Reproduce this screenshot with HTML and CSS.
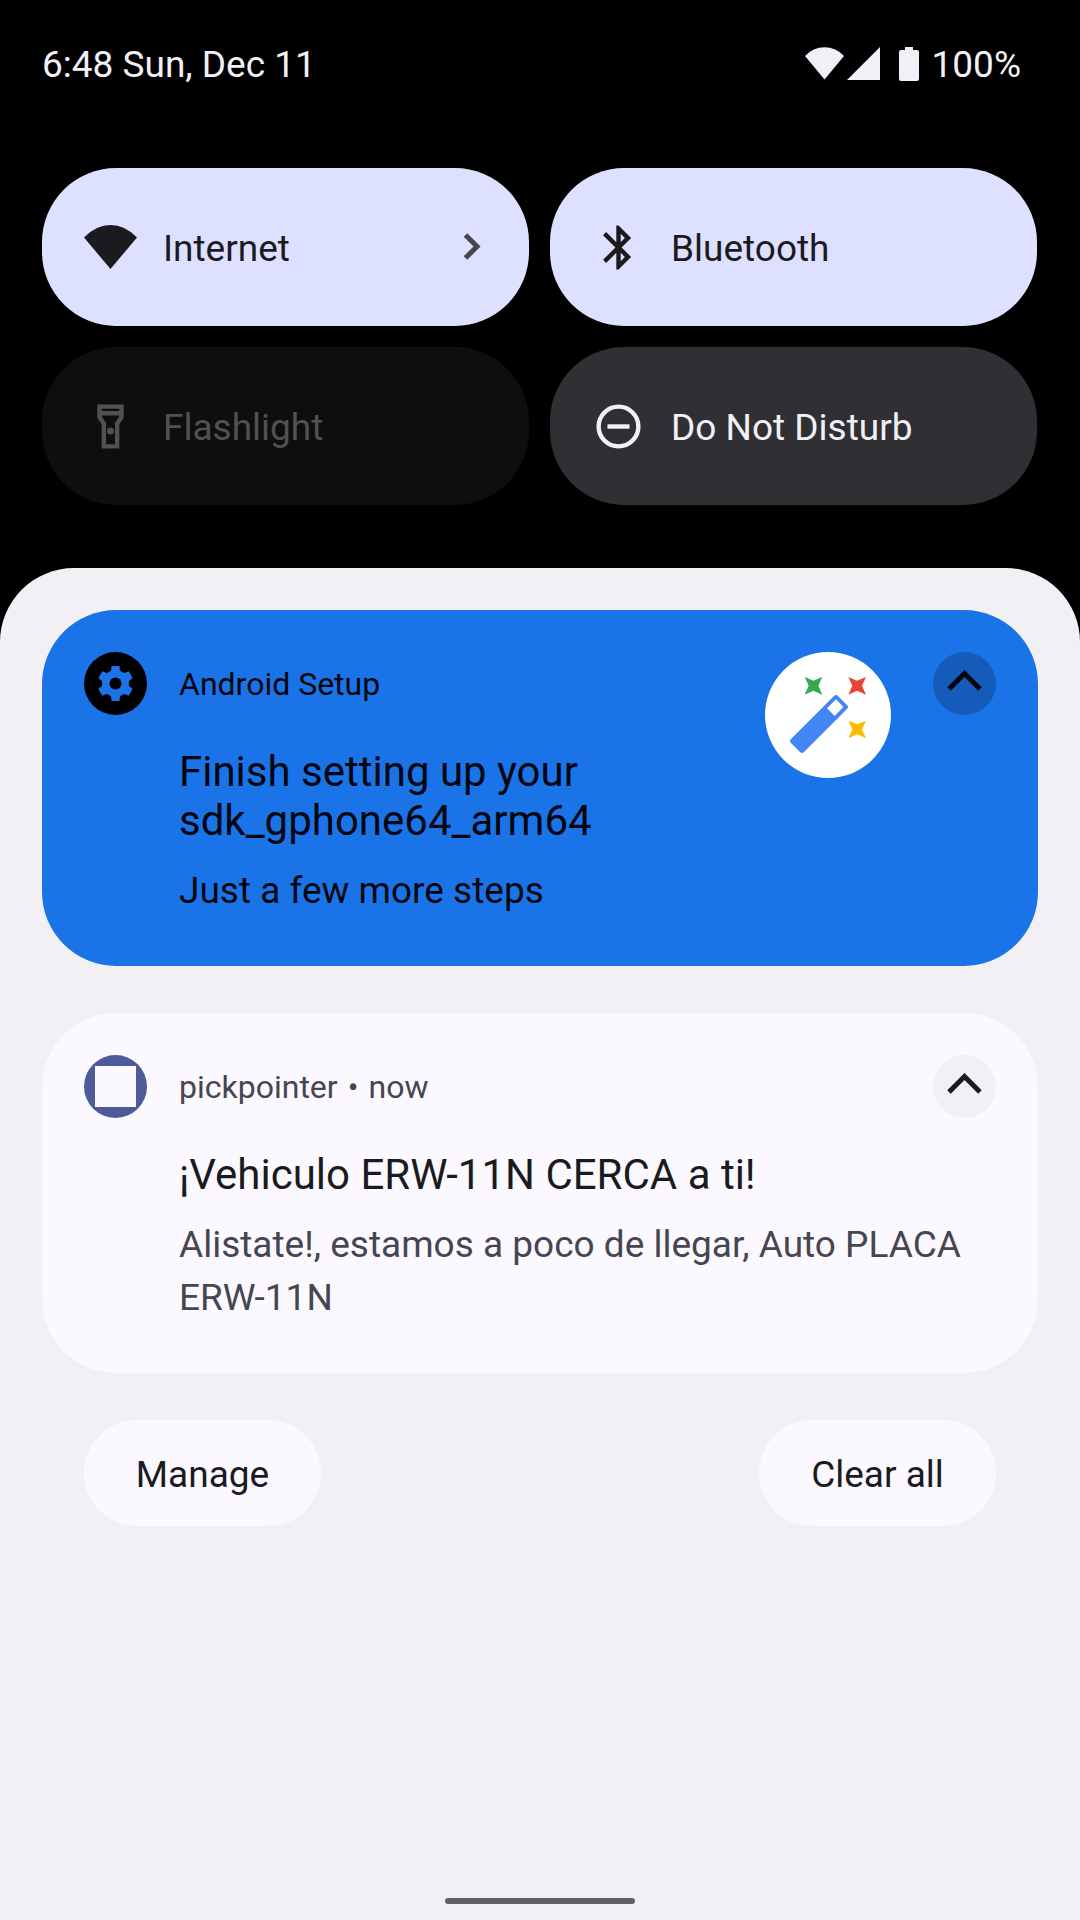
FILE: index.html
```html
<!DOCTYPE html>
<html lang="en">
<head>
<meta charset="utf-8">
<meta name="viewport" content="width=device-width, initial-scale=1">
<title>Notifications</title>
<link rel="stylesheet" href="styles.css">
</head>
<body>
<header class="status">
  <div class="status-text">6:48 Sun, Dec 11</div>
  <div class="status-icons">
    <svg class="status-wifi" viewBox="0 0 39 33" aria-hidden="true"><path d="M0 9A26 26 0 0 1 39 9L19.500 32.500Z"/></svg>
    <svg class="status-signal" viewBox="0 0 33 33" aria-hidden="true"><path d="M0 33L33 0V33Z"/></svg>
    <svg class="status-battery" viewBox="0 0 20 34" aria-hidden="true"><path d="M6 0h8v3h4q2 0 2 2v27q0 2-2 2H2q-2 0-2-2V5q0-2 2-2h4z"/></svg>
    <span class="status-text">100%</span>
  </div>
</header>

<section class="tiles" aria-label="Quick settings">
  <button class="tile tile-on" type="button">
    <svg class="tile-icon" viewBox="0 0 53 53" aria-hidden="true"><path d="M0 16.500Q12 4 26.500 4T53 16.500L26.500 48Z"/></svg>
    <span class="tile-label">Internet</span>
    <svg class="tile-chevron" viewBox="0 0 18 28" aria-hidden="true"><path d="M2.500 2L14 13.500L2.500 25"/></svg>
  </button>
  <button class="tile tile-on" type="button">
    <svg class="tile-icon" viewBox="0 0 24 24" aria-hidden="true"><path d="M17.710 7.710L12 2h-1v7.590L6.410 5 5 6.410 10.590 12 5 17.590 6.410 19 11 14.410V22h1l5.710-5.710L13.410 12l4.300-4.290zM13 5.830l1.880 1.880L13 9.590V5.830zm1.880 10.460L13 18.170v-3.760l1.880 1.880z"/></svg>
    <span class="tile-label">Bluetooth</span>
  </button>
  <button class="tile tile-disabled" type="button" disabled>
    <svg class="tile-icon" viewBox="0 0 24 24" aria-hidden="true"><path fill-rule="evenodd" d="M18 2H6v6l2 3v11h8V11l2-3V2zM16 4v1H8V4h8zM14 10.400V20h-4v-9.600L8 7.400V7h8v.4z"/><circle cx="12" cy="14" r="1.600"/></svg>
    <span class="tile-label">Flashlight</span>
  </button>
  <button class="tile tile-off" type="button">
    <svg class="tile-icon" viewBox="0 0 24 24" aria-hidden="true"><circle cx="12" cy="12" r="9" fill="none" stroke="currentColor" stroke-width="2"/><path d="M7 11h10v2H7z"/></svg>
    <span class="tile-label">Do Not Disturb</span>
  </button>
</section>

<main class="shade">
  <article class="card card-setup">
    <svg class="app-icon" viewBox="-31.500 -31.500 63 63" aria-hidden="true">
      <circle r="31.500"/>
      <g class="gear">
        <circle r="13"/>
        <path id="tooth" d="M-7-11L-4.500-13L-4-17.500H4L4.500-13L7-11V0H-7Z"/>
        <use href="#tooth" transform="rotate(60)"/>
        <use href="#tooth" transform="rotate(120)"/>
        <use href="#tooth" transform="rotate(180)"/>
        <use href="#tooth" transform="rotate(240)"/>
        <use href="#tooth" transform="rotate(300)"/>
      </g>
      <circle r="6"/>
    </svg>
    <div class="card-header"><span>Android Setup</span></div>
    <svg class="large-icon" viewBox="75 66 378 378" aria-hidden="true">
      <circle cx="264" cy="255" r="189" fill="#fff"/>
      <path d="M288 204L315 231L186 360L159 333Z" fill="#4285f4" stroke="#4285f4" stroke-width="17" stroke-linejoin="round"/>
      <path d="M288 208L310 231L284 258L261 235Z" fill="#fff"/>
      <path d="M194 141L220 152L247 141L235 167L247 194L220 182L194 194L206 167Z" fill="#34a853"/>
      <path d="M325 141L351 152L378 141L366 167L378 194L351 182L325 194L337 167Z" fill="#ea4335"/>
      <path d="M325 272L351 283L378 272L366 298L378 325L351 313L325 325L337 298Z" fill="#fbbc04"/>
    </svg>
    <button class="expand" type="button" aria-label="Collapse">
      <svg viewBox="0 0 63 63" aria-hidden="true"><path d="M16 37L31.500 21.500L47 37"/></svg>
    </button>
    <div class="card-body">
      <h2 class="card-title">Finish setting up your sdk_gphone64_arm64</h2>
      <p class="card-text">Just a few more steps</p>
    </div>
  </article>

  <article class="card card-plain">
    <svg class="app-icon" viewBox="0 0 63 63" aria-hidden="true"><circle cx="31.500" cy="31.500" r="31.500" fill="#4d5b9a"/><path d="M11 11h41v41H11z" fill="#fbf9ff"/></svg>
    <div class="card-header"><span>pickpointer</span><span>•</span><span>now</span></div>
    <button class="expand" type="button" aria-label="Collapse">
      <svg viewBox="0 0 63 63" aria-hidden="true"><path d="M16 37L31.500 21.500L47 37"/></svg>
    </button>
    <div class="card-body card-body-wide">
      <h2 class="card-title">¡Vehiculo ERW-11N CERCA a ti!</h2>
      <p class="card-text">Alistate!, estamos a poco de llegar, Auto PLACA ERW-11N</p>
    </div>
  </article>

  <div class="actions">
    <button class="pill" type="button">Manage</button>
    <button class="pill" type="button">Clear all</button>
  </div>

  <div class="nav-handle"></div>
</main>
</body>
</html>
```
FILE: styles.css
```css
* {
  box-sizing: border-box;
}

body {
  margin: 0;
  min-height: 100vh;
  display: flex;
  flex-direction: column;
  background: #000;
  color: #1b1b1f;
  font: 400 37px/53px Roboto, sans-serif;
}

button {
  border: 0;
  padding: 0;
  font: inherit;
  color: inherit;
}

svg {
  display: block;
  flex: none;
  fill: currentColor;
}

.status {
  display: flex;
  justify-content: space-between;
  align-items: center;
  padding: 36px 59px 0 42px;
  color: #f2f0f7;
}

.status-icons {
  display: flex;
  align-items: center;
}

.status-text,
.tile-label,
.card-header,
.pill {
  padding-top: 2px;
}

.status-wifi {
  width: 39px;
  height: 33px;
  margin-right: 3px;
}

.status-signal {
  width: 33px;
  height: 33px;
  margin-right: 19px;
}

.status-battery {
  width: 20px;
  height: 34px;
  margin-right: 13px;
}

.tiles {
  display: grid;
  grid-template-columns: 1fr 1fr;
  gap: 21px;
  padding: 77px 43px 63px 42px;
}

.tile {
  display: flex;
  align-items: center;
  gap: 26px;
  height: 158px;
  padding: 0 48px 0 42px;
  border-radius: 74px;
  text-align: left;
}

.tile-on {
  background: #dde1ff;
}

.tile-off {
  background: #303034;
  color: #f2f0f7;
}

.tile-disabled {
  background: #0e0e0e;
  color: #515153;
}

.tile-icon {
  width: 53px;
  height: 53px;
}

.tile-label {
  flex: 1;
}

.tile-chevron {
  width: 18px;
  height: 28px;
  fill: none;
  stroke: #45464f;
  stroke-width: 5;
}

.shade {
  flex: 1;
  display: flex;
  flex-direction: column;
  gap: 47px;
  padding: 42px 42px 16px;
  border-radius: 74px 74px 0 0;
  background: #f2f0f5;
}

.card {
  display: grid;
  grid-template-columns: 63px 1fr auto 63px;
  grid-template-rows: 63px auto;
  row-gap: 32px;
  padding: 42px 42px 49px;
  border-radius: 74px;
}

.card-setup {
  background: #1b73e8;
  color: #02060f;
}

.card-plain {
  background: #fbf9ff;
}

.app-icon {
  width: 63px;
  height: 63px;
  color: #000;
}

.gear {
  fill: #1b73e8;
}

.card-header {
  grid-column: 2;
  align-self: center;
  display: flex;
  gap: 10px;
  margin-left: 32px;
  font-size: 32px;
}

.large-icon {
  grid-column: 3;
  grid-row: 1 / 3;
  width: 126px;
  height: 126px;
  margin-right: 42px;
}

.expand {
  grid-column: 4;
  grid-row: 1;
  border-radius: 50%;
  background: #f2f0f5;
}

.expand svg {
  fill: none;
  stroke: currentColor;
  stroke-width: 5;
}

.card-setup .expand {
  background: #155cba;
}

.card-body {
  grid-column: 2;
  grid-row: 2;
  margin-left: 32px;
}

.card-body-wide {
  grid-column: 2 / 5;
}

.card-title {
  margin: 0 0 19px;
  font-size: 42px;
  font-weight: 400;
  line-height: 49px;
}

.card-text {
  margin: 0;
}

.card-plain .card-header,
.card-plain .card-text {
  color: #45464f;
}

.actions {
  display: flex;
  justify-content: space-between;
  padding: 0 42px;
}

.pill {
  height: 106px;
  min-width: 237px;
  padding-inline: 50px;
  border-radius: 53px;
  background: #fbf9ff;
}

.nav-handle {
  align-self: center;
  width: 190px;
  height: 6px;
  margin-top: auto;
  border-radius: 3px;
  background: #626164;
}
```
